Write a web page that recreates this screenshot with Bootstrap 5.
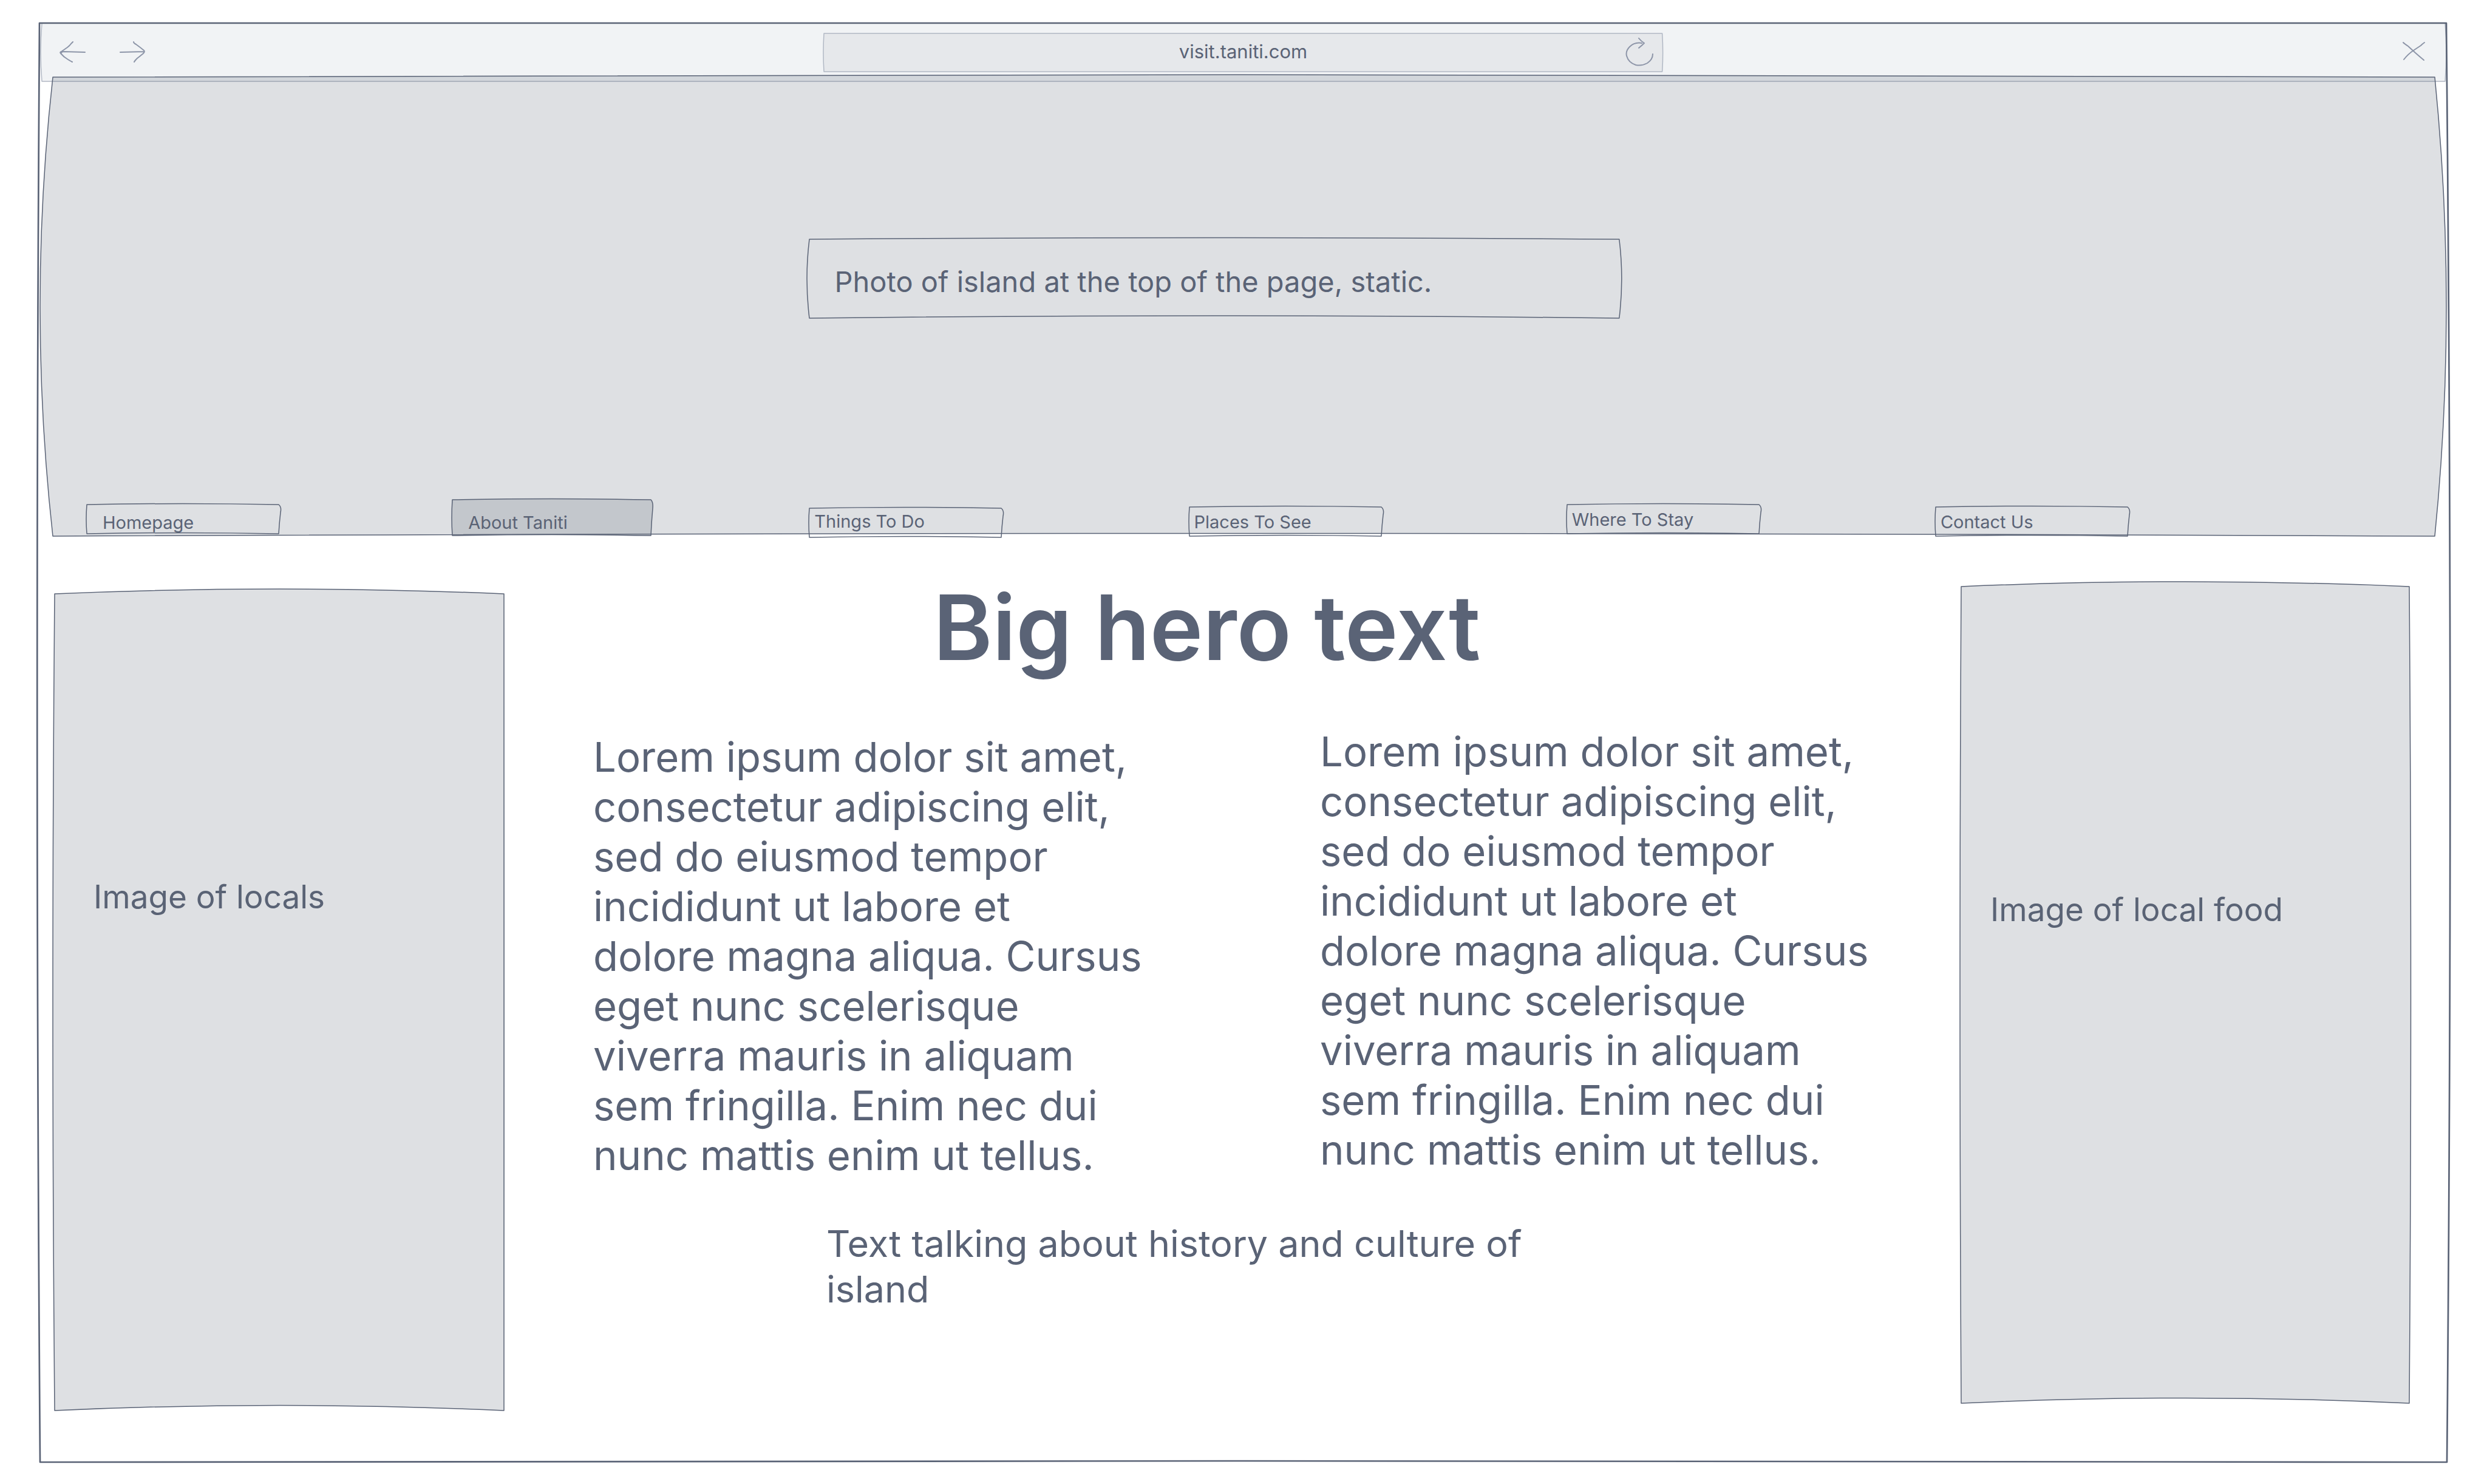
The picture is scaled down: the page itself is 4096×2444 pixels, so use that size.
<!DOCTYPE html>
<html lang="en">
<head>
<meta charset="utf-8">
<meta name="viewport" content="width=device-width, initial-scale=1">
<title>Visit Taniti – wireframe</title>
<link href="https://cdn.jsdelivr.net/npm/bootstrap@5.3.0/dist/css/bootstrap.min.css" rel="stylesheet">
<style>
  :root { --ink: #5a6376; --wash: rgba(92, 98, 116, .2); --faint: #8d95a8; --edge: #b1b8c4; }
  body { font-family: Inter, "Liberation Sans", Arial, sans-serif; color: var(--ink); background: #fff; }
  .page-pad { padding: 38px 66px 36px 65px; }

  /* hand-drawn outlines stretch with the box that holds them */
  .sketch { position: absolute; inset: 0; width: 100%; height: 100%; overflow: visible; pointer-events: none; fill: none; stroke: var(--ink); stroke-width: 1.5; stroke-linejoin: round; }
  .sketch path { vector-effect: non-scaling-stroke; }
  .sketch-frame { stroke-width: 2.7; }
  .sketch-wash { fill: var(--wash); }
  .sketch-bar { fill: #f1f3f5; stroke: var(--edge); }
  .sketch-url { fill: #e6e8eb; stroke: var(--edge); }

  .browser-bar { display: grid; grid-template-columns: 1fr 35% 1fr; height: 96px; padding: 0 34px 0 32px; }
  .address { height: 63px; margin: 0 -9px 0 -7px; padding-right: 14px; }
  .address input { font-size: 31px; line-height: 40px; padding: 0 0 2px 62px; color: var(--ink); background: none; border: 0; text-align: center; min-width: 0; }
  .icon-btn { padding: 0; border: 0; background: none; line-height: 0; }
  .icon-btn svg { fill: none; stroke: var(--faint); stroke-width: 2; stroke-linecap: round; stroke-linejoin: round; }
  .icon-gap { gap: 56px; }

  .hero-photo { margin: -7px 20px 0 22px; height: 756px; }
  .photo-note { margin: 267px 0 0 31.75%; width: 34%; height: 130px; padding: 40px 42px; font-size: 47px; line-height: 60px; white-space: nowrap; }
  .site-nav { display: grid; grid-template-columns: 602fr 588fr 625fr 622fr 607fr 317fr; height: 60px; padding: 0 505px 0 56px; align-items: start; }
  .site-nav a { width: 317px; height: 48px; padding: 7px 8px 0; font-size: 29px; line-height: 36px; color: var(--ink); white-space: nowrap; }
  .site-nav .drop-sm { margin-top: 8px; }
  .site-nav .drop-md { margin-top: 12px; }
  .site-nav .drop-lg { margin-top: 14px; padding-top: 4px; }
  .site-nav .inset-text { padding: 12px 26px 0; }
  .site-nav .active { width: 328px; height: 59px; padding: 20px 26px 0; }

  .content { display: grid; grid-template-columns: 740fr 2400fr 738fr; padding: 70px 62px 0 25px; align-items: start; }
  .photo-panel { height: 1345px; padding: 0 48px; font-size: 53px; line-height: 68px; }
  .panel-locals { margin-top: 25px; padding: 465px 64px 0; }
  .panel-food { margin-top: 13px; padding-top: 498px; }
  .story { padding: 0 96px 0 147px; }
  .story-title { font-size: 148px; line-height: 162px; font-weight: 600; margin: 0 0 82px; padding-left: 560px; white-space: nowrap; }
  .copy-grid { display: grid; grid-template-columns: 1fr 1fr; gap: 237px; }
  .copy-grid p { font-size: 67px; line-height: 82px; margin: 0; white-space: nowrap; }
  .copy-grid p:first-child { padding-top: 9px; }
  .story-note { font-size: 61px; line-height: 75px; margin: 67px 0 0 384px; max-width: 1200px; }
</style>
</head>
<body>
<div class="page-pad min-vh-100 d-flex flex-column">
  <div class="position-relative flex-grow-1 d-flex flex-column">

    <div class="browser-bar position-relative align-items-center">
      <svg class="sketch sketch-bar" viewBox="0 0 3964 96" preserveAspectRatio="none" aria-hidden="true"><path d="M4 0H3961Q3965 48 3961 96Q1982 94 4 96Q0 48 4 0Z"/></svg>
      <div class="d-flex icon-gap position-relative">
        <button class="icon-btn" type="button" aria-label="Back"><svg width="44" height="36" viewBox="0 0 44 36"><path d="M23 1L20 4Q18 7 14 10L4 17Q1 18 3 20Q8 26 15 30Q20 33 22 34M4 19Q5 17 8 17L43 18"/></svg></button>
        <button class="icon-btn" type="button" aria-label="Forward"><svg width="44" height="36" viewBox="0 0 44 36"><path d="M23 1Q23 3 27 5Q34 10 40 15Q42 17 39 20Q33 25 29 28Q25 32 24 34M1 18L40 17"/></svg></button>
      </div>
      <div class="address position-relative d-flex align-items-center">
        <svg class="sketch sketch-url" viewBox="0 0 1383 63" preserveAspectRatio="none" aria-hidden="true"><path d="M0 0Q692 -2 1383 0Q1385 32 1383 63Q692 61 0 63Q-2 32 0 0Z"/></svg>
        <input class="position-relative flex-grow-1" type="text" value="visit.taniti.com" aria-label="Address">
        <button class="icon-btn position-relative" type="button" aria-label="Reload"><svg width="48" height="48" viewBox="0 0 48 48"><path d="M28 9Q16 7 8 15Q1 22 3 30Q6 41 18 45Q28 47 37 42Q46 36 46 27M23 1Q27 6 32 9Q28 13 23 17"/></svg></button>
      </div>
      <div class="d-flex justify-content-end position-relative">
        <button class="icon-btn" type="button" aria-label="Close"><svg width="40" height="36" viewBox="0 0 40 36"><path d="M2 2Q4 4 10 8L22 19Q30 26 36 31M37 2Q34 4 31 7L19 15Q10 21 3 30"/></svg></button>
      </div>
    </div>

    <header class="hero-photo position-relative d-flex flex-column">
      <svg class="sketch sketch-wash" viewBox="0 0 3922 756" preserveAspectRatio="none" aria-hidden="true"><path d="M0 0Q1961 -8 3922 0Q3960 378 3922 756Q1961 747 0 756Q-42 378 0 0Z"/></svg>
      <div class="photo-note position-relative">
        <svg class="sketch" viewBox="0 0 1332 130" preserveAspectRatio="none" aria-hidden="true"><path d="M0 0Q666 -5 1332 0Q1340 65 1332 130Q666 122 0 130Q-8 65 0 0Z"/></svg>
        Photo of island at the top of the page, static.
      </div>
      <nav class="site-nav mt-auto" aria-label="Main">
        <a class="position-relative text-decoration-none drop-sm inset-text" href="#"><svg class="sketch" viewBox="0 0 317 48" preserveAspectRatio="none" aria-hidden="true"><path d="M0 0Q158 -3 316 0Q321 4 319 13Q317 30 316 48Q158 45 0 48Q-2 24 0 0Z"/></svg>Homepage</a>
        <a class="position-relative text-decoration-none active" href="#" aria-current="page"><svg class="sketch sketch-wash" viewBox="0 0 328 59" preserveAspectRatio="none" aria-hidden="true"><path d="M0 0Q164 -3 327 0Q331 4 330 14Q328 36 327 59Q164 56 0 59Q-2 30 0 0Z"/></svg>About Taniti</a>
        <a class="position-relative text-decoration-none drop-lg" href="#"><svg class="sketch" viewBox="0 0 317 48" preserveAspectRatio="none" aria-hidden="true"><path d="M0 0Q158 -3 316 0Q321 4 319 13Q317 30 316 48Q158 45 0 48Q-2 24 0 0Z"/></svg>Things To Do</a>
        <a class="position-relative text-decoration-none drop-md" href="#"><svg class="sketch" viewBox="0 0 317 48" preserveAspectRatio="none" aria-hidden="true"><path d="M0 0Q158 -3 316 0Q321 4 319 13Q317 30 316 48Q158 45 0 48Q-2 24 0 0Z"/></svg>Places To See</a>
        <a class="position-relative text-decoration-none drop-sm" href="#"><svg class="sketch" viewBox="0 0 317 48" preserveAspectRatio="none" aria-hidden="true"><path d="M0 0Q158 -3 316 0Q321 4 319 13Q317 30 316 48Q158 45 0 48Q-2 24 0 0Z"/></svg>Where To Stay</a>
        <a class="position-relative text-decoration-none drop-md" href="#"><svg class="sketch" viewBox="0 0 317 48" preserveAspectRatio="none" aria-hidden="true"><path d="M0 0Q158 -3 316 0Q321 4 319 13Q317 30 316 48Q158 45 0 48Q-2 24 0 0Z"/></svg>Contact Us</a>
      </nav>
    </header>

    <main class="content">
      <aside class="photo-panel panel-locals position-relative">
        <svg class="sketch sketch-wash" viewBox="0 0 740 1345" preserveAspectRatio="none" aria-hidden="true"><path d="M0 0Q370 -16 740 0Q743 672 740 1345Q370 1328 0 1345Q-6 672 0 0Z"/></svg>
        Image of locals
      </aside>
      <section class="story">
        <h1 class="story-title">Big hero text</h1>
        <div class="copy-grid">
          <p>Lorem ipsum dolor sit amet,<br>consectetur adipiscing elit,<br>sed do eiusmod tempor<br>incididunt ut labore et<br>dolore magna aliqua. Cursus<br>eget nunc scelerisque<br>viverra mauris in aliquam<br>sem fringilla. Enim nec dui<br>nunc mattis enim ut tellus.</p>
          <p>Lorem ipsum dolor sit amet,<br>consectetur adipiscing elit,<br>sed do eiusmod tempor<br>incididunt ut labore et<br>dolore magna aliqua. Cursus<br>eget nunc scelerisque<br>viverra mauris in aliquam<br>sem fringilla. Enim nec dui<br>nunc mattis enim ut tellus.</p>
        </div>
        <p class="story-note">Text talking about history and culture of island</p>
      </section>
      <aside class="photo-panel panel-food position-relative">
        <svg class="sketch sketch-wash" viewBox="0 0 738 1345" preserveAspectRatio="none" aria-hidden="true"><path d="M0 0Q369 -16 738 0Q743 672 738 1345Q369 1328 0 1345Q-4 672 0 0Z"/></svg>
        Image of local food
      </aside>
    </main>

    <svg class="sketch sketch-frame" viewBox="0 0 3965 2370" preserveAspectRatio="none" aria-hidden="true"><path d="M0 0Q1983 -4 3964 0Q3976 1185 3965 2370Q1983 2366 1 2370Q-8 1185 0 0Z"/></svg>
  </div>
</div>
<script src="https://cdn.jsdelivr.net/npm/bootstrap@5.3.0/dist/js/bootstrap.bundle.min.js"></script>
</body>
</html>
